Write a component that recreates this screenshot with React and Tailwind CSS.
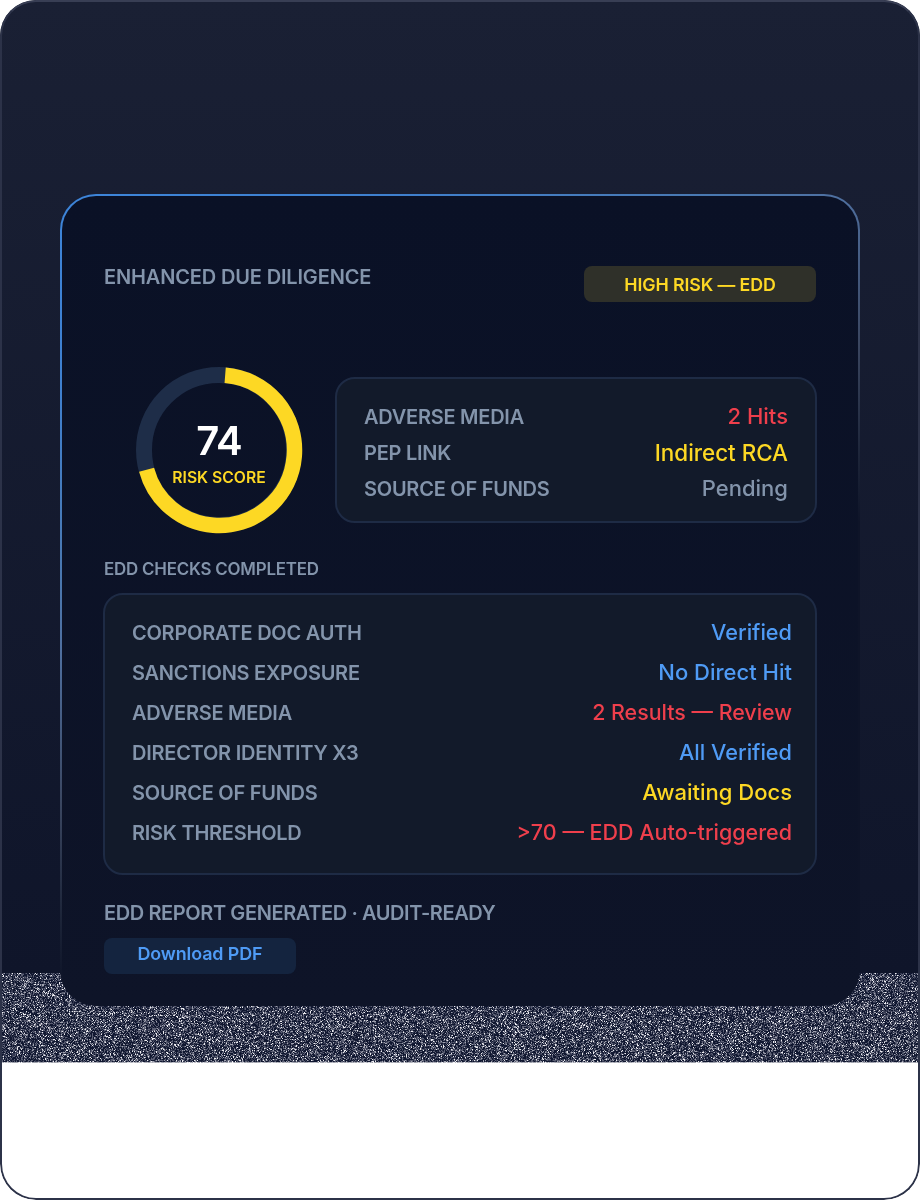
import React, { useEffect, useRef } from "react";

function Noise() {
  const ref = useRef(null);
  useEffect(() => {
    const c = ref.current;
    const ctx = c.getContext("2d");
    const img = ctx.createImageData(c.width, c.height);
    let s = 12345;
    const rnd = () => ((s = (s * 1664525 + 1013904223) >>> 0) / 4294967296);
    const lastRow = (c.height - 1) * c.width * 4;
    for (let i = 0; i < img.data.length; i += 4) {
      const r = rnd();
      let col = r < 0.4 ? [16, 23, 48] : r < 0.62 ? [52, 57, 80] : r < 0.84 ? [92, 96, 116] : r < 0.95 ? [160, 162, 175] : [236, 236, 240];
      if (i >= lastRow) col = col.map((v) => Math.round(v * 0.4 + 255 * 0.6));
      img.data[i] = col[0];
      img.data[i + 1] = col[1];
      img.data[i + 2] = col[2];
      img.data[i + 3] = 255;
    }
    ctx.putImageData(img, 0, 0);
  }, []);
  return <canvas ref={ref} width={920} height={90} className="block w-full h-[90px]" />;
}

function Ring() {
  return (
    <div className="relative w-[170px] h-[170px] shrink-0">
      <svg width="170" height="170" viewBox="0 0 170 170" className="block">
        <circle cx="85" cy="85" r="75" fill="none" stroke="#1e2d48" strokeWidth="16" />
        <circle
          cx="85.25"
          cy="85.25"
          r="75.25"
          fill="none"
          stroke="#fdd824"
          strokeWidth="15.5"
          strokeDasharray="328.4 472.8"
          transform="rotate(-85.5 85.25 85.25)"
        />
      </svg>
      <div className="absolute inset-0 flex flex-col items-center justify-center pt-[6px]">
        <span className="text-[40px] leading-[44px] font-semibold tracking-[-1px] text-white">74</span>
        <span className="mt-[5px] text-[15.7px] leading-[20px] font-semibold text-[#fdd824]">RISK SCORE</span>
      </div>
    </div>
  );
}

function Row({ label, value, color, h, size }) {
  return (
    <div className={`flex items-center justify-between ${h}`}>
      <span className="text-[20px] font-semibold tracking-[-0.25px] text-[#8394ab]">{label}</span>
      <span className={`-mt-px font-medium ${size} ${color}`}>{value}</span>
    </div>
  );
}

const BLUE = "text-[#4f9bf5]";
const RED = "text-[#ef3f4c]";
const YEL = "text-[#fdd824]";
const GREY = "text-[#8394ab]";

export default function App() {
  return (
    <div className="relative w-[920px] h-[1200px] bg-white rounded-[36px] overflow-hidden font-['Inter',sans-serif]">
      <div className="absolute inset-x-0 top-0 h-[973px] bg-[linear-gradient(180deg,#1a2034_0%,#0f152a_100%)]" />
      <div className="absolute inset-x-0 top-[973px] h-[90px]">
        <Noise />
      </div>
      <div className="absolute inset-0 z-20 rounded-[36px] border-2 border-[#2c3248] border-t-[#383e54] pointer-events-none" />

      <div className="relative z-10 pt-[194px] px-[60px]">
        <div className="h-[812px] rounded-[36px] border-2 border-transparent px-[42px] pt-[70px] [background:linear-gradient(180deg,#0a1126,#0e1428)_padding-box,linear-gradient(150deg,#3d85da_0%,#3f80cf_15%,#4a78b0_30%,#4f6f9f_36%,#3a4660_48%,#1c2438_57%,#0e1428_62%)_border-box]">
          <div className="flex items-start justify-between h-[36px]">
            <span className="-mt-px text-[20px] leading-[24px] font-semibold tracking-[-0.15px] text-[#8394ab]">ENHANCED DUE DILIGENCE</span>
            <div className="flex items-center justify-center w-[232px] h-[36px] pt-[3px] rounded-[8px] bg-[#2f3029] text-[17.8px] font-semibold tracking-[-0.1px] text-[#fdd824]">
              HIGH RISK — EDD
            </div>
          </div>

          <div className="flex items-center mt-[63px] ml-[30px] -mr-[1px]">
            <Ring />
            <div className="ml-[31px] flex-1 h-[146px] rounded-[20px] border-2 border-[#1e2b45] bg-[#121a2a] px-[27px] pt-[20px]">
              <Row label="ADVERSE MEDIA" value="2 Hits" color={RED} h="h-[36px]" size="text-[22px]" />
              <Row label="PEP LINK" value="Indirect RCA" color={YEL} h="h-[36px]" size="text-[22.4px]" />
              <Row label="SOURCE OF FUNDS" value="Pending" color={GREY} h="h-[36px]" size="text-[22px]" />
            </div>
          </div>

          <div className="mt-[24px] text-[16.9px] leading-[20px] font-semibold tracking-[-0.2px] text-[#8394ab]">EDD CHECKS COMPLETED</div>

          <div className="mt-[14px] -mx-[1px] h-[282px] rounded-[20px] border-2 border-[#1e2b45] bg-[#121a2a] pl-[27px] pr-[23px] pt-[18px]">
            <Row label="CORPORATE DOC AUTH" value="Verified" color={BLUE} h="h-[40px]" size="text-[21.7px]" />
            <Row label="SANCTIONS EXPOSURE" value="No Direct Hit" color={BLUE} h="h-[40px]" size="text-[22px]" />
            <Row label="ADVERSE MEDIA" value="2 Results — Review" color={RED} h="h-[40px]" size="text-[21.4px]" />
            <Row label="DIRECTOR IDENTITY X3" value="All Verified" color={BLUE} h="h-[40px]" size="text-[21.7px]" />
            <Row label="SOURCE OF FUNDS" value="Awaiting Docs" color={YEL} h="h-[40px]" size="text-[22px]" />
            <Row label="RISK THRESHOLD" value=">70 — EDD Auto-triggered" color={RED} h="h-[40px]" size="text-[21.5px]" />
          </div>

          <div className="mt-[26px] text-[20px] leading-[24px] font-semibold tracking-[-0.4px] text-[#8394ab]">EDD REPORT GENERATED · AUDIT-READY</div>
          <div className="mt-[13px] flex items-center justify-center w-[192px] h-[36px] pb-[4px] rounded-[8px] bg-[#14243f] text-[17.9px] font-semibold tracking-[-0.1px] text-[#4f9bf5]">
            Download PDF
          </div>
        </div>
      </div>
    </div>
  );
}
